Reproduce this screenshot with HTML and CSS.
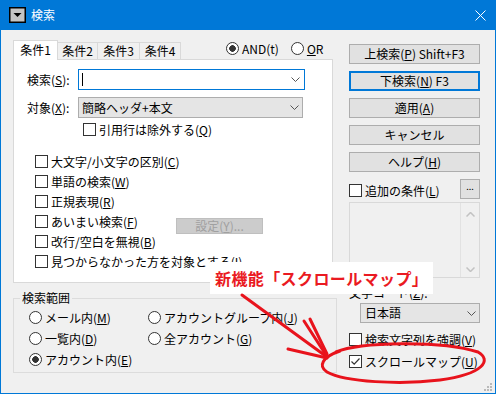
FILE: index.html
```html
<!DOCTYPE html>
<html lang="ja">
<head>
<meta charset="utf-8">
<title>検索</title>
<link rel="stylesheet" href="styles.css">
</head>
<body>
<div class="window">
  <div class="titlebar">
    <svg class="ticon" viewBox="0 0 17 16"><rect x="0.75" y="0.75" width="15.5" height="14.5" fill="#c4c4c4" stroke="#000" stroke-width="1.5"/><polygon points="4.5,6 12.5,6 8.5,10" fill="#000"/></svg>
    <span class="ttext">検索</span>
    <svg class="tclose" viewBox="0 0 11 11"><path d="M0.5 0.5L10.5 10.5M10.5 0.5L0.5 10.5" stroke="#fff" stroke-width="1"/></svg>
  </div>
  <div class="content">
    <div class="left">
      <div class="tabrow">
        <div class="tab sel">条件1</div>
        <div class="tab t2">条件2</div>
        <div class="tab t3">条件3</div>
        <div class="tab t4">条件4</div>
        <div class="logic">
          <span class="radio on"></span><span class="lt">AND(t)</span>
          <span class="radio or"></span><span class="lt"><u>O</u>R</span>
        </div>
      </div>
      <div class="panel">
        <div class="frow">
          <span class="flabel">検索(<u>S</u>):</span>
          <div class="input"><span class="caret"></span><svg class="chev" viewBox="0 0 9 5"><path d="M0.5 0.5L4.5 4.5L8.5 0.5" fill="none" stroke="#555" stroke-width="1"/></svg></div>
        </div>
        <div class="frow r2">
          <span class="flabel">対象(<u>X</u>):</span>
          <div class="combo"><span>簡略ヘッダ+本文</span><svg class="chev" viewBox="0 0 9 5"><path d="M0.5 0.5L4.5 4.5L8.5 0.5" fill="none" stroke="#555" stroke-width="1"/></svg></div>
        </div>
        <div class="chk quote"><span class="box"></span>引用行は除外する(<u>Q</u>)</div>
        <div class="opts">
          <div class="chk"><span class="box"></span>大文字/小文字の区別(<u>C</u>)</div>
          <div class="chk"><span class="box"></span>単語の検索(<u>W</u>)</div>
          <div class="chk"><span class="box"></span>正規表現(<u>R</u>)</div>
          <div class="chk"><span class="box"></span><span class="fuzzy">あいまい検索(<u>F</u>)</span><span class="setbtn">設定(<u>Y</u>)...</span></div>
          <div class="chk"><span class="box"></span>改行/空白を無視(<u>B</u>)</div>
          <div class="chk"><span class="box"></span>見つからなかった方を対象とする(<u>I</u>)</div>
        </div>
      </div>
      <fieldset class="group">
        <legend>検索範囲</legend>
        <div class="rgrid">
          <div class="ropt"><span class="radio"></span>メール内(<u>M</u>)</div>
          <div class="ropt"><span class="radio"></span>アカウントグループ内(<u>J</u>)</div>
          <div class="ropt"><span class="radio"></span>一覧内(<u>D</u>)</div>
          <div class="ropt"><span class="radio"></span>全アカウント(<u>G</u>)</div>
          <div class="ropt"><span class="radio on"></span>アカウント内(<u>E</u>)</div>
        </div>
      </fieldset>
    </div>
    <div class="right">
      <div class="btns">
        <div class="btn">上検索(<u>P</u>) Shift+F3</div>
        <div class="btn def">下検索(<u>N</u>) F3</div>
        <div class="btn">適用(<u>A</u>)</div>
        <div class="btn">キャンセル</div>
        <div class="btn">ヘルプ(<u>H</u>)</div>
      </div>
      <div class="addrow">
        <div class="chk addchk"><span class="box"></span>追加の条件(<u>L</u>)</div>
        <div class="dotbtn">...</div>
      </div>
      <div class="listbox">
        <div class="lsb">
          <svg class="lchev" viewBox="0 0 9 5"><path d="M0.5 4.5L4.5 0.5L8.5 4.5" fill="none" stroke="#c2c2c2" stroke-width="1.5"/></svg>
          <svg class="lchev" viewBox="0 0 9 5"><path d="M0.5 0.5L4.5 4.5L8.5 0.5" fill="none" stroke="#c2c2c2" stroke-width="1.5"/></svg>
        </div>
      </div>
      <div class="enclabel">文字コード(<u>Z</u>):</div>
      <div class="combo enc"><span>日本語</span><svg class="chev" viewBox="0 0 9 5"><path d="M0.5 0.5L4.5 4.5L8.5 0.5" fill="none" stroke="#555" stroke-width="1"/></svg></div>
      <div class="chk hl"><span class="box"></span>検索文字列を強調(<u>V</u>)</div>
      <div class="chk sm"><span class="box checked"><svg viewBox="0 0 11 11"><path d="M1.5 5.5L4.2 8.2L9.5 2.5" fill="none" stroke="#333" stroke-width="1.2"/></svg></span>スクロールマップ(<u>U</u>)</div>
    </div>
  </div>

  <div class="annot">新機能「スクロールマップ」</div>
  <svg class="overlay" viewBox="0 0 496 394">
    <g fill="none" stroke="#e8131c" stroke-width="3" stroke-linecap="round">
      <path d="M242 295 L327 357"/>
      <path d="M304 321 L326 355"/>
      <path d="M310 319 L327 354"/>
      <path d="M288 349 L327 358"/>
      <path d="M336 352 C 360 342, 440 340, 478 352 C 492 360, 484 374, 440 380 C 400 385, 345 382, 327 372 C 318 366, 322 357, 340 351"/>
    </g>
    <g fill="#b9b9b9">
      <rect x="490" y="383" width="2" height="2"/>
      <rect x="487" y="386" width="2" height="2"/>
      <rect x="490" y="386" width="2" height="2"/>
      <rect x="484" y="389" width="2" height="2"/>
      <rect x="487" y="389" width="2" height="2"/>
      <rect x="490" y="389" width="2" height="2"/>
    </g>
  </svg>
</div>
</body>
</html>
```

FILE: styles.css
```css
* { box-sizing: border-box; }
html, body { margin: 0; padding: 0; }
body {
  width: 496px;
  height: 394px;
  overflow: hidden;
  font: 12px/14px "Noto Sans CJK JP", "Noto Sans CJK SC", sans-serif;
  color: #000;
  background: #f0f0f0;
}
u { text-decoration: underline; text-underline-offset: 1px; }

.window {
  position: relative;
  width: 496px;
  height: 394px;
  border: 1px solid #0078d7;
  border-top: 0;
  background: #f0f0f0;
}

.titlebar {
  height: 30px;
  background: #0078d7;
  display: flex;
  align-items: center;
  color: #fff;
}
.ticon { width: 17px; height: 16px; margin-left: 8px; }
.ttext { margin-left: 5px; }
.tclose { width: 11px; height: 11px; margin-left: auto; margin-right: 9px; }

.content {
  display: flex;
  padding: 10px 0 0 12px;
}
.left { width: 324px; display: flex; flex-direction: column; }
.right { width: 131px; margin-left: 12px; margin-top: 4px; display: flex; flex-direction: column; }

/* tabs */
.tabrow { display: flex; align-items: flex-end; height: 19px; }
.tab {
  height: 17px;
  border: 1px solid #d9d9d9;
  border-bottom: 0;
  background: #f0f0f0;
  text-align: center;
  line-height: 15px;
  margin-left: -1px;
}
.tab.sel {
  height: 20px;
  width: 45px;
  margin-left: 0;
  margin-bottom: -1px;
  background: #fff;
  line-height: 17px;
  position: relative;
  z-index: 1;
}
.tab.t2 { width: 41px; }
.tab.t3 { width: 43px; }
.tab.t4 { width: 42px; }

.logic {
  display: flex;
  align-items: center;
  align-self: flex-start;
  height: 13px;
  margin-top: 2px;
  margin-left: 45px;
}
.radio.or { margin-left: 12px; }

.radio {
  width: 13px;
  height: 13px;
  border: 1px solid #333;
  border-radius: 50%;
  background: #fff;
  margin-right: 3px;
  flex: none;
}
.radio.on { background: radial-gradient(circle, #333 0 3px, #fff 3.6px); }

/* panel */
.panel {
  width: 320px;
  height: 224px;
  background: #fff;
  border: 1px solid #d9d9d9;
  padding: 9px 0 0 13px;
}
.frow { display: flex; align-items: center; height: 21px; }
.r2 { margin-top: 7px; }
.flabel { width: 51px; }
.input {
  width: 227px;
  height: 21px;
  border: 1px solid #0078d7;
  background: #fff;
  display: flex;
  align-items: center;
}
.caret { width: 1px; height: 13px; background: #000; margin-left: 3px; }
.chev { width: 9px; height: 5px; margin-left: auto; margin-right: 4px; }
.combo {
  width: 225px;
  height: 21px;
  border: 1px solid #adadad;
  background: #e5e5e5;
  display: flex;
  align-items: center;
  padding-left: 3px;
}
.combo .chev { margin-right: 3px; }

.chk { display: flex; align-items: center; height: 13px; white-space: nowrap; }
.box {
  width: 13px;
  height: 13px;
  border: 1px solid #333;
  background: #fff;
  margin-right: 3px;
  flex: none;
}
.box svg { display: block; width: 11px; height: 11px; }
.quote { margin: 5px 0 0 56px; }
.opts { display: flex; flex-direction: column; gap: 7px; margin: 19px 0 0 8px; }
.fuzzy { width: 125px; flex: none; }
.setbtn {
  width: 87px;
  height: 16px;
  align-self: flex-start;
  margin-top: 3px;
  flex: none;
  background: #cccccc;
  border: 1px solid #bfbfbf;
  color: #a0a0a0;
  text-align: center;
  line-height: 14px;
}

/* group */
.group {
  width: 324px;
  min-width: 0;
  margin: 8px 0 0 0;
  padding: 0 0 6px 0;
  border: 1px solid #dcdcdc;
}
.group legend { margin-left: 6px; padding: 0 2px; line-height: 14px; }
.rgrid {
  display: grid;
  grid-template-columns: 119px auto;
  row-gap: 8px;
  padding: 6px 0 0 15px;
}
.ropt { display: flex; align-items: center; height: 13px; white-space: nowrap; }

/* right column */
.btns { display: flex; flex-direction: column; gap: 7px; }
.btn {
  height: 20px;
  border: 1px solid #adadad;
  background: #e1e1e1;
  display: flex;
  align-items: center;
  justify-content: center;
  white-space: nowrap;
}
.btn.def { border: 2px solid #0078d7; }
.addrow { display: flex; align-items: flex-start; height: 20px; margin-top: 7px; }
.addchk { margin-top: 5px; }
.dotbtn {
  margin-left: auto;
  width: 20px;
  height: 20px;
  border: 1px solid #adadad;
  background: #e1e1e1;
  font-size: 9px;
  line-height: 14px;
  text-align: center;
}
.listbox {
  margin-top: 3px;
  height: 76px;
  border: 1px solid #d9d9d9;
  background: #f0f0f0;
  display: flex;
  justify-content: flex-end;
}
.lsb {
  width: 19px;
  border-left: 1px solid #e2e2e2;
  background: #f0f0f0;
  display: flex;
  flex-direction: column;
  justify-content: space-between;
  align-items: center;
  padding: 9px 0 5px;
}
.lchev { width: 9px; height: 5px; }
.enclabel { margin-top: 8px; line-height: 14px; }
.combo.enc { width: 120px; height: 20px; margin-left: 11px; margin-top: 3px; padding-left: 4px; }
.hl { margin-top: 10px; }
.sm { margin-top: 9px; }

/* annotation overlay */
.annot {
  position: absolute;
  left: 209px;
  top: 262px;
  width: 223px;
  height: 32px;
  background: #fff;
  color: #ea1a22;
  font-weight: bold;
  font-size: 16px;
  letter-spacing: 0.4px;
  display: flex;
  align-items: center;
  padding-left: 5px;
  white-space: nowrap;
  overflow: hidden;
}
.overlay {
  position: absolute;
  left: -1px;
  top: 0;
  width: 496px;
  height: 394px;
  pointer-events: none;
}
```
